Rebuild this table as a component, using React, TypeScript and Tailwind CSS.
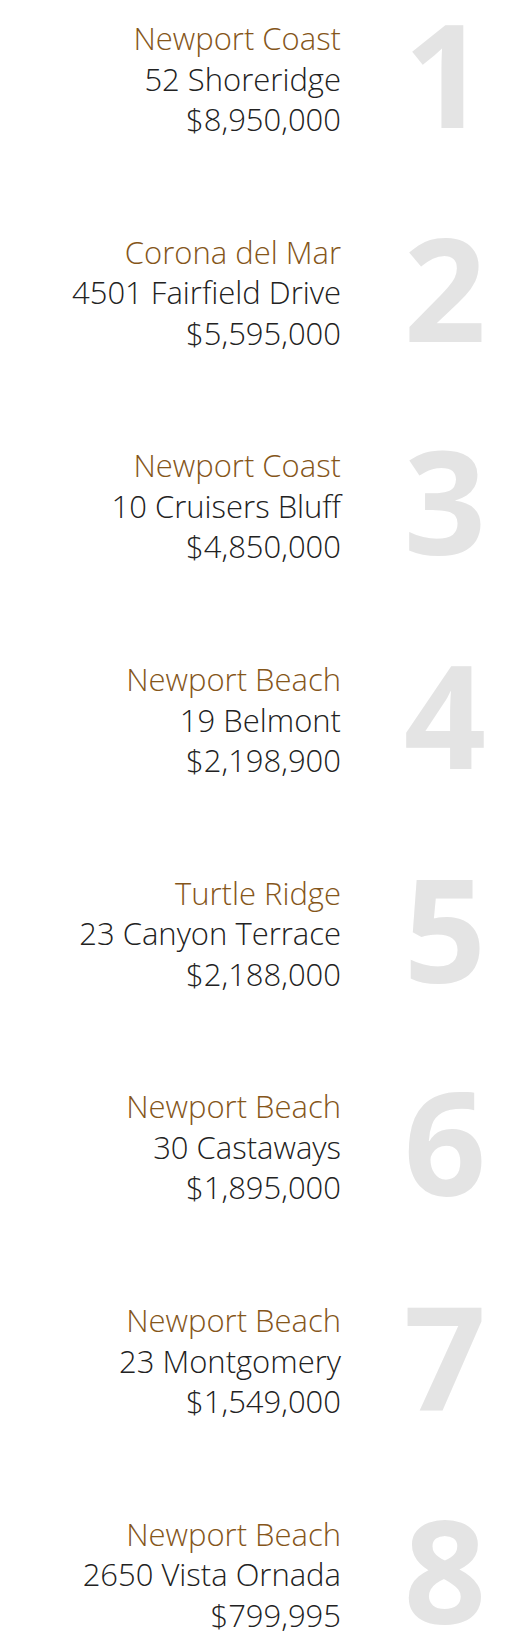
const listings = [
  { area: "Newport Coast", address: "52 Shoreridge", price: "$8,950,000" },
  { area: "Corona del Mar", address: "4501 Fairfield Drive", price: "$5,595,000" },
  { area: "Newport Coast", address: "10 Cruisers Bluff", price: "$4,850,000" },
  { area: "Newport Beach", address: "19 Belmont", price: "$2,198,900" },
  { area: "Turtle Ridge", address: "23 Canyon Terrace", price: "$2,188,000" },
  { area: "Newport Beach", address: "30 Castaways", price: "$1,895,000" },
  { area: "Newport Beach", address: "23 Montgomery", price: "$1,549,000" },
  { area: "Newport Beach", address: "2650 Vista Ornada", price: "$799,995" },
];

export default function App() {
  return (
    <div className="w-[506px] bg-white pt-[18px] font-['Open_Sans',sans-serif]">
      {listings.map((item, i) => (
        <div key={i} className="flex items-start h-[213.7px]">
          <div className="w-[341px] text-right text-[31px] font-light leading-[40.5px] text-[#222222]">
            <div className="text-[#85561a]">{item.area}</div>
            <div>{item.address}</div>
            <div>{item.price}</div>
          </div>
          <div className="w-[100px] ml-[54px] -mt-[46px] text-center text-[144px] font-bold leading-[1.4] text-[#e4e4e4]">
            {i + 1}
          </div>
        </div>
      ))}
    </div>
  );
}
